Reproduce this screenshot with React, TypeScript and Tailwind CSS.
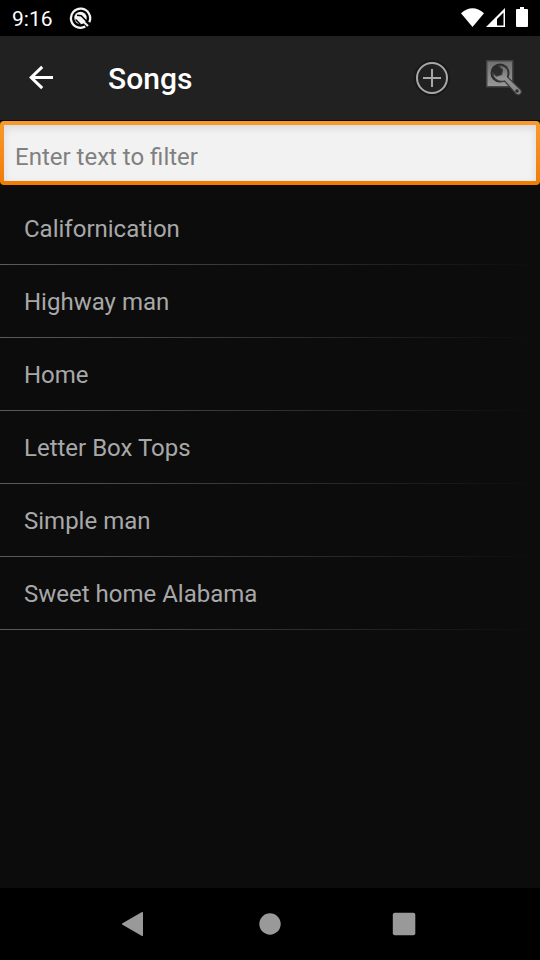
import React from "react";

const songs: string[] = [
  "Californication",
  "Highway man",
  "Home",
  "Letter Box Tops",
  "Simple man",
  "Sweet home Alabama",
];

function StatusBar() {
  return (
    <div className="flex h-9 items-center bg-black px-3 text-white">
      <span className="pt-0.5 text-[21px] leading-6">9:16</span>
      <svg className="ml-4 size-6" viewBox="0 0 24 24" fill="none" aria-hidden="true">
        <path d="M16.300 20.600A9.600 9.600 0 1 1 20.300 16.200" stroke="#f4f4f4" strokeWidth="2.300" />
        <circle cx="11.500" cy="12" r="6.200" fill="#f4f4f4" />
        <path d="M8 9.200L12.200 9.800L20 17.800" stroke="#000" strokeWidth="1.500" />
        <path d="M6.600 13.500L11.500 18.500" stroke="#000" strokeWidth="1.500" />
        <path d="M11 12.500L19 20" stroke="#f4f4f4" strokeWidth="2" />
      </svg>
      <svg className="ml-auto h-6 w-17" viewBox="0 0 68 24" fill="#fff" aria-hidden="true">
        <path d="M1 7.200Q12.500-2.800 24 7.200L12.500 21Z" />
        <path fillRule="evenodd" d="M26 21L45 2V21ZM37 19.500H43.500V6.500L37 13Z" />
        <path d="M60 1H64V3H67Q68 3 68 4V20Q68 21 67 21H57Q56 21 56 20V4Q56 3 57 3H60Z" />
      </svg>
    </div>
  );
}

function ActionBar() {
  return (
    <header className="flex h-[84px] items-center bg-[#212121]">
      <button type="button" aria-label="Back" className="flex h-full w-[84px] items-center justify-center">
        <svg className="size-9" viewBox="0 0 36 36" fill="none" stroke="#fff" strokeWidth="3" aria-hidden="true">
          <path d="M29 17.500H7.500M18.200 6.800L7.200 17.500L18.200 28.200" />
        </svg>
      </button>
      <h1 className="ml-6 flex-1 pt-0.5 text-[30px] leading-9 font-medium text-white">Songs</h1>
      <button type="button" aria-label="Add song" className="flex h-full w-[72px] items-center justify-center">
        <svg className="size-9" viewBox="0 0 36 36" fill="none" stroke="#a8a8a8" strokeWidth="2" aria-hidden="true">
          <circle cx="18" cy="18" r="17" stroke="#181818" />
          <circle cx="18" cy="18" r="15" />
          <path d="M9 18H27M18 9V27" />
        </svg>
      </button>
      <button type="button" aria-label="Settings" className="flex h-full w-[72px] items-center justify-center">
        <svg className="size-10" viewBox="0 0 40 40" aria-hidden="true">
          <defs>
            <linearGradient id="panel" x1="0" y1="0" x2="0" y2="1">
              <stop offset="0" stopColor="#707070" />
              <stop offset="1" stopColor="#989898" />
            </linearGradient>
            <linearGradient id="wrench" x1="0" y1="0" x2="0" y2="1">
              <stop offset="0" stopColor="#6c6c6c" />
              <stop offset="0.450" stopColor="#939393" />
              <stop offset="1" stopColor="#858585" />
            </linearGradient>
          </defs>
          <rect x="2" y="2" width="27.500" height="27.500" rx="1" fill="#444" />
          <rect x="3.500" y="3.500" width="24.500" height="24.500" fill="url(#panel)" />
          <circle cx="16" cy="15" r="9.500" fill="#2b2b2b" />
          <path
            d="M14.500 8C19 6.500 24.500 10 24 15.500C23.900 17 23.500 18 23.500 19L36.500 31.500C39 34.500 35.500 38.500 32 36L20.500 23C14.500 24.500 9 21 8.500 14.500L12.500 18L17.500 16.500L18.500 12Z"
            fill="url(#wrench)"
            stroke="#3a3a3a"
            strokeWidth="1.200"
          />
          <circle cx="33" cy="33" r="1.800" fill="#303030" />
        </svg>
      </button>
    </header>
  );
}

function Filter() {
  return (
    <div className="mt-px rounded-[4px] bg-linear-to-b from-[#f89a2c] to-[#f07b00] p-1">
      <input
        type="text"
        aria-label="Filter songs"
        placeholder="Enter text to filter"
        className="block h-14 w-full bg-[#f2f2f2] px-[11px] pt-2 text-2xl text-black shadow-[inset_0_3px_8px_#0000001a] outline-none placeholder:text-[#808080]"
      />
    </div>
  );
}

function SongList() {
  return (
    <ul className="mt-[7px] flex-1">
      {songs.map((song) => (
        <li key={song}>
          <button type="button" className="block h-[72px] w-full px-6 pt-0.5 text-left text-2xl text-[#a8a8a8]">
            {song}
          </button>
          <div className="h-px bg-linear-to-r from-[#5c5c5c] to-[#0c0c0c]" />
        </li>
      ))}
    </ul>
  );
}

function NavigationBar() {
  return (
    <nav className="flex h-[72px] justify-center bg-black">
      <button type="button" aria-label="Back" className="flex w-1/4 items-center justify-center">
        <svg className="size-7" viewBox="0 0 28 28" fill="#999" aria-hidden="true">
          <path d="M1.500 13.200L20.500 2.200Q22 1.500 22 3V25Q22 26.500 20.500 25.800L1.500 14.800Q0 14 1.500 13.200Z" />
        </svg>
      </button>
      <button type="button" aria-label="Home" className="flex w-1/4 items-center justify-center">
        <svg className="size-7" viewBox="0 0 28 28" fill="#999" aria-hidden="true">
          <circle cx="14" cy="14" r="10.700" />
        </svg>
      </button>
      <button type="button" aria-label="Recent apps" className="flex w-1/4 items-center justify-center">
        <svg className="size-7" viewBox="0 0 28 28" fill="#999" aria-hidden="true">
          <rect x="1.800" y="2.800" width="22.500" height="22.500" rx="2" />
        </svg>
      </button>
    </nav>
  );
}

export default function App() {
  return (
    <div className="flex min-h-screen flex-col bg-[#0c0c0c] font-['Roboto',sans-serif]">
      <StatusBar />
      <ActionBar />
      <Filter />
      <SongList />
      <NavigationBar />
    </div>
  );
}
